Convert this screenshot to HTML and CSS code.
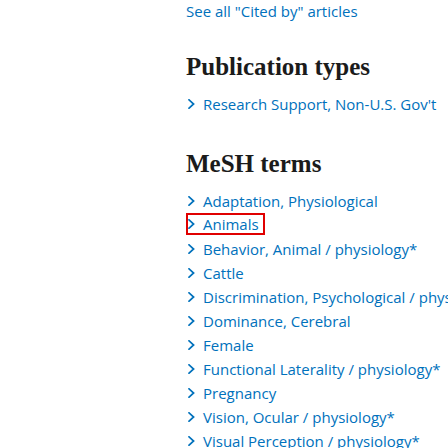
FILE: index.html
```html
<!DOCTYPE html>
<html>
<head>
<meta charset="utf-8">
<link rel="stylesheet" href="styles.css">
</head>
<body>
<div class="page">
  <a class="see-all" href="#">See all "Cited by" articles</a>

  <section class="block pub">
    <h2 class="title">Publication types</h2>
    <ul class="terms">
      <li><svg class="chev" viewBox="0 0 7 10"><polyline points="1,0.8 5.6,5 1,9.2"/></svg><a href="#">Research Support, Non-U.S. Gov't</a></li>
    </ul>
  </section>

  <section class="block mesh">
    <h2 class="title">MeSH terms</h2>
    <ul class="terms">
      <li><svg class="chev" viewBox="0 0 7 10"><polyline points="1,0.8 5.6,5 1,9.2"/></svg><a href="#">Adaptation, Physiological</a></li>
      <li class="focused"><svg class="chev" viewBox="0 0 7 10"><polyline points="1,0.8 5.6,5 1,9.2"/></svg><a href="#">Animals</a></li>
      <li><svg class="chev" viewBox="0 0 7 10"><polyline points="1,0.8 5.6,5 1,9.2"/></svg><a href="#">Behavior, Animal / physiology*</a></li>
      <li><svg class="chev" viewBox="0 0 7 10"><polyline points="1,0.8 5.6,5 1,9.2"/></svg><a href="#">Cattle</a></li>
      <li><svg class="chev" viewBox="0 0 7 10"><polyline points="1,0.8 5.6,5 1,9.2"/></svg><a href="#">Discrimination, Psychological / physiology*</a></li>
      <li><svg class="chev" viewBox="0 0 7 10"><polyline points="1,0.8 5.6,5 1,9.2"/></svg><a href="#">Dominance, Cerebral</a></li>
      <li><svg class="chev" viewBox="0 0 7 10"><polyline points="1,0.8 5.6,5 1,9.2"/></svg><a href="#">Female</a></li>
      <li><svg class="chev" viewBox="0 0 7 10"><polyline points="1,0.8 5.6,5 1,9.2"/></svg><a href="#">Functional Laterality / physiology*</a></li>
      <li><svg class="chev" viewBox="0 0 7 10"><polyline points="1,0.8 5.6,5 1,9.2"/></svg><a href="#">Pregnancy</a></li>
      <li><svg class="chev" viewBox="0 0 7 10"><polyline points="1,0.8 5.6,5 1,9.2"/></svg><a href="#">Vision, Ocular / physiology*</a></li>
      <li><svg class="chev" viewBox="0 0 7 10"><polyline points="1,0.8 5.6,5 1,9.2"/></svg><a href="#">Visual Perception / physiology*</a></li>
    </ul>
  </section>
</div>
</body>
</html>
```

FILE: styles.css
```css
html, body {
  margin: 0;
  padding: 0;
  overflow: hidden;
  background: #ffffff;
}
.page {
  padding: 1px 0 0 186px;
  font-family: "Open Sans", "DejaVu Sans", sans-serif;
  font-size: 15px;
  color: #0071bc;
  white-space: nowrap;
}
a {
  color: #0071bc;
  text-decoration: none;
}
.see-all {
  display: block;
  line-height: 20px;
}
.title {
  font-family: "Liberation Serif", "DejaVu Serif", serif;
  font-weight: bold;
  font-size: 25px;
  color: #1b1b1b;
  margin: 0;
  line-height: 28px;
}
.pub { margin-top: 32px; }
.pub .title { margin-bottom: 11px; }
.mesh { margin-top: 34px; }
.mesh .title { margin-bottom: 11px; }
.terms {
  list-style: none;
  margin: 0;
  padding: 0;
}
.terms li {
  display: flex;
  align-items: center;
  height: 24px;
}
.terms li.focused {
  height: 22px;
  margin-bottom: 2px;
  width: 79px;
  box-sizing: border-box;
  outline: 2px solid #e00000;
  outline-offset: -2px;
}
.chev {
  flex-shrink: 0;
  width: 7px;
  height: 10px;
  margin: 0 8px 0 2px;
  fill: none;
  stroke: #0071bc;
  stroke-width: 1.7;
  stroke-linecap: square;
}
```
